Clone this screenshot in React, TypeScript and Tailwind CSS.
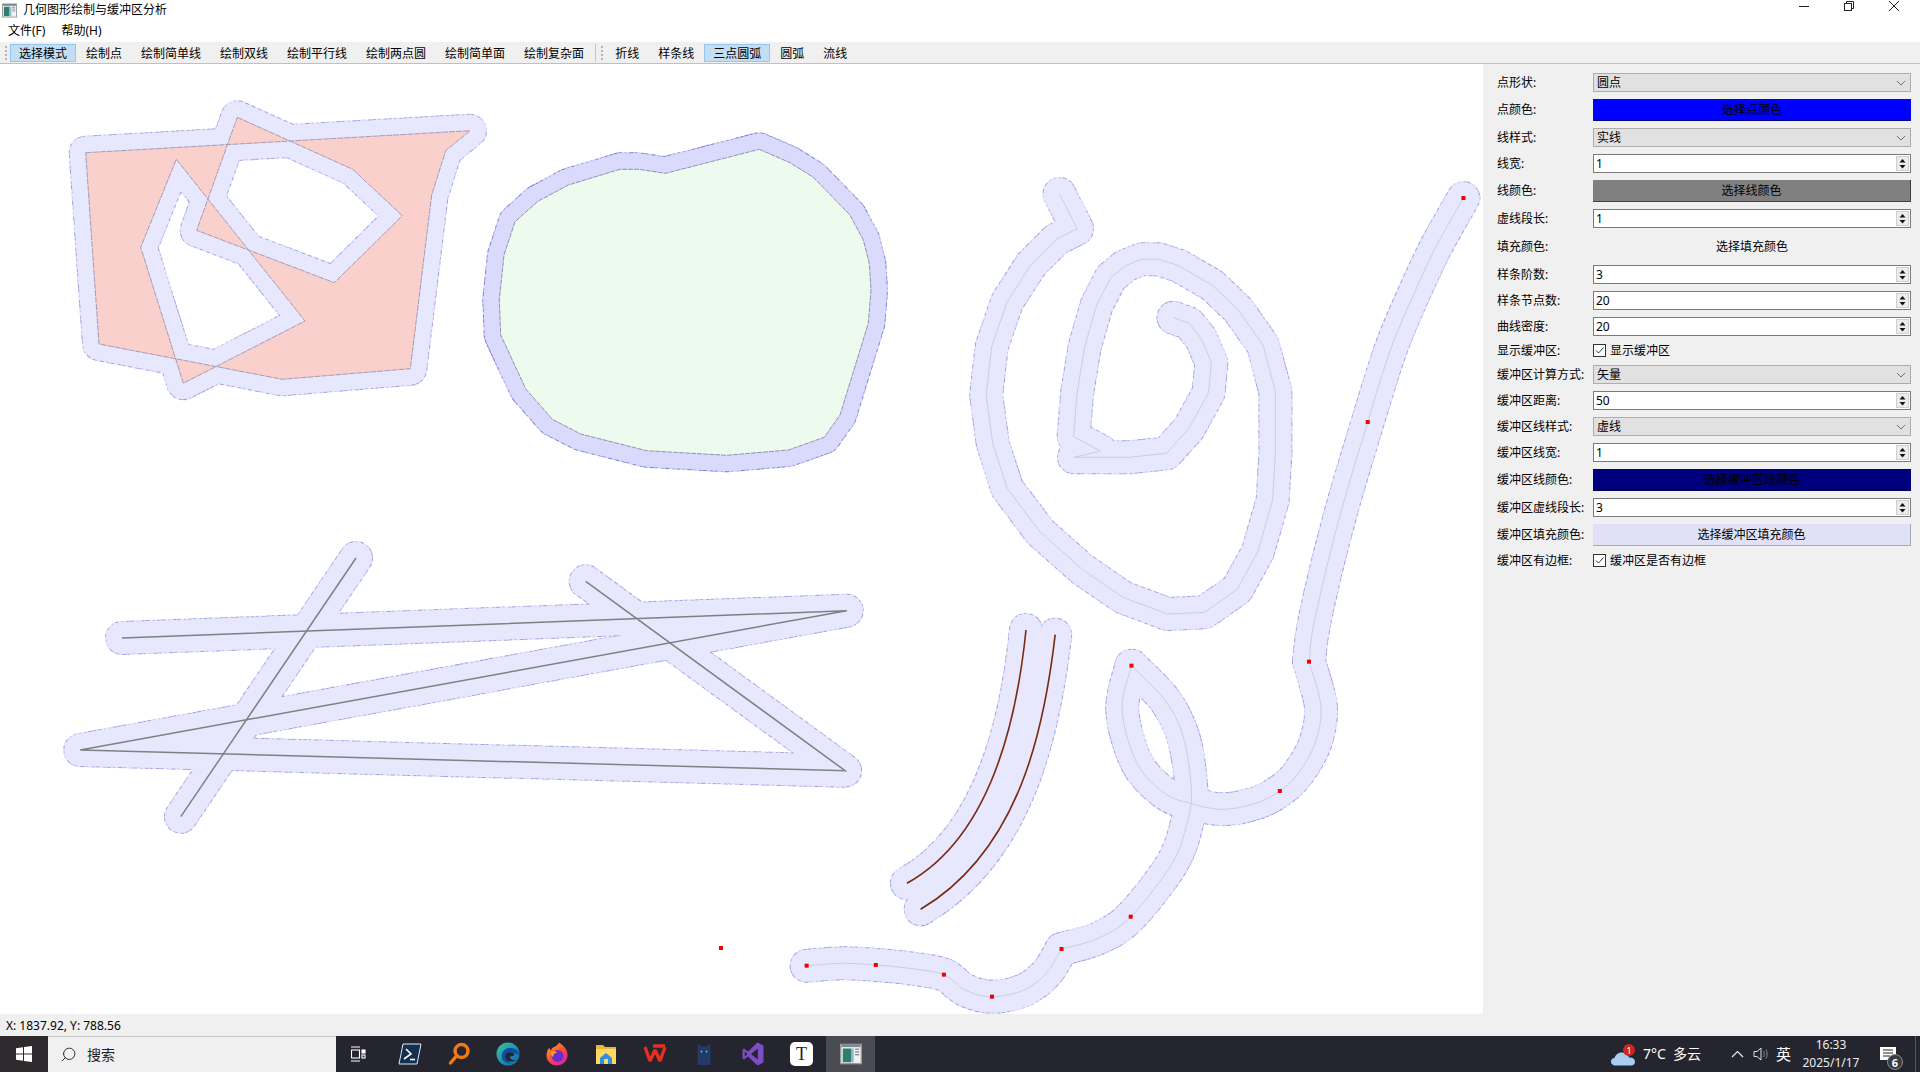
import { Search } from "lucide-react";

type Pt = number[];

const map = (ox: number, oy: number, sx: number, sy: number, pts: Pt[]) =>
  pts.map(([x, y]) => [ox + x / sx, oy + y / sy]);
const line = (pts: Pt[], close = false) =>
  "M" + pts.map((p) => p[0].toFixed(1) + " " + p[1].toFixed(1)).join(" L") + (close ? " Z" : "");

// catmull-rom through the clicked points
const smooth = (pts: Pt[]) => {
  let d = `M${pts[0][0].toFixed(1)} ${pts[0][1].toFixed(1)}`;
  for (let i = 0; i < pts.length - 1; i++) {
    const a = pts[i - 1] || pts[i];
    const b = pts[i];
    const c = pts[i + 1];
    const e = pts[i + 2] || c;
    d += ` C${(b[0] + (c[0] - a[0]) / 6).toFixed(1)} ${(b[1] + (c[1] - a[1]) / 6).toFixed(1)} ${(c[0] - (e[0] - b[0]) / 6).toFixed(1)} ${(c[1] - (e[1] - b[1]) / 6).toFixed(1)} ${c[0].toFixed(1)} ${c[1].toFixed(1)}`;
  }
  return d;
};

const outer = map(50, 90, 3, 3, [[107,188],[1260,122],[1187,182],[1145,315],[1081,836],[697,868],[147,762]]);
const holeA = map(50, 90, 3, 3, [[562,82],[908,238],[1057,377],[853,578],[440,421]]);
const holeB = map(50, 90, 3, 3, [[379,208],[765,693],[400,880],[272,472]]);
const complexRings = [line(outer, true), line(holeA, true), line(holeB, true)];

const greenPoly = line(map(470, 120, 3, 3, [[868,88],[960,128],[1030,172],[1140,285],[1180,360],[1198,430],[1203,510],[1195,610],[1110,885],[1063,952],[955,990],[770,1006],[530,992],[332,942],[247,898],[168,808],[92,645],[88,540],[102,405],[135,305],[205,243],[295,195],[450,148],[505,148],[587,160]]), true);

const grayA = line(map(50, 530, 1.889, 3, [[136,324],[1505,242],[57,660],[1502,722],[1012,154]]));
const grayB = line(map(50, 530, 1.889, 3, [[578,84],[247,860]]));

const spiral = line(map(960, 170, 2.904, 3, [[289,72],[340,176],[280,208],[207,283],[137,395],[92,530],[76,675],[95,820],[137,955],[232,1085],[355,1198],[473,1282],[603,1332],[710,1327],[805,1258],[865,1145],[908,990],[916,850],[916,665],[880,525],[808,420],[732,345],[635,287],[577,268],[527,268],[480,287],[438,323],[397,405],[362,530],[340,670],[330,800],[408,843],[331,862],[490,862],[600,850],[665,775],[722,668],[730,578],[700,505],[665,460],[620,443]]));

const z10 = (pts: Pt[]) => map(960, 170, 2.904, 3, pts);
const z11 = (pts: Pt[]) => map(780, 610, 2.703, 3, pts);
const curveTop = [
  ...z10([[1462,84],[1380,235],[1310,390],[1250,540],[1184,756],[1100,1050],[1030,1350]]),
  ...z11([[1430,155]]),
];
const curveLoop = z11([[1430,155],[1462,290],[1446,401],[1400,491],[1351,543],[1286,580],[1195,598],[1110,580],[1040,550],[965,460],[925,300],[950,167]]);
const curveDown = z11([[950,167],[1040,270],[1090,380],[1112,540],[1100,640],[1060,760],[948,920],[860,985],[761,1017]]);
const curveEnd = z11([[761,1017],[720,1090],[660,1140],[573,1160],[500,1140],[443,1094],[350,1075],[259,1065],[170,1060],[72,1067]]);
const splinePaths = [smooth(curveTop), smooth(curveLoop), smooth(curveDown), smooth(curveEnd)];

const redDots = [
  ...z10([[1462,84],[1184,756]]),
  ...z11([[1430,155],[1351,543],[950,167],[948,920],[761,1017],[573,1160],[443,1094],[259,1065],[72,1067]]),
  [721, 948],
];

const arcA = "M1026 630 C1016.8 720 990.9 836.7 906.9 883.3";
const arcB = "M1055.2 634.7 C1044.5 726.7 1020.5 850 920.6 909.3";

const lightShapes = [...complexRings, grayA, grayB, spiral, ...splinePaths, arcA, arcB];

function Canvas() {
  return (
    <svg viewBox="0 64 1483 950" className="block h-[950px] w-[1483px] flex-none bg-white">
      <defs>
        <pattern id="dashLight" width="7" height="7" patternUnits="userSpaceOnUse" patternTransform="rotate(24)">
          <rect width="7" height="7" fill="#e2e2fb" />
          <rect width="4" height="4" fill="#a0a0e2" />
          <rect x="4" y="4" width="3" height="3" fill="#a0a0e2" />
        </pattern>
        <pattern id="dashDark" width="7" height="7" patternUnits="userSpaceOnUse" patternTransform="rotate(24)">
          <rect width="7" height="7" fill="#d0d0f6" />
          <rect width="4" height="4" fill="#7c7cd0" />
          <rect x="4" y="4" width="3" height="3" fill="#7c7cd0" />
        </pattern>
      </defs>

      <g fill="none" strokeLinejoin="round" strokeLinecap="round">
        {lightShapes.map((d, i) => (
          <path key={i} d={d} stroke="url(#dashLight)" strokeWidth="34" />
        ))}
        {lightShapes.map((d, i) => (
          <path key={i} d={d} stroke="#e7e7fe" strokeWidth="32" />
        ))}
        <path d={greenPoly} stroke="url(#dashDark)" strokeWidth="34" />
        <path d={greenPoly} stroke="#dadafc" strokeWidth="32" />
      </g>

      <path d={complexRings.join(" ")} fillRule="evenodd" fill="#f9d0cb" stroke="#a79bb4" strokeWidth="1" strokeDasharray="6 1" />
      <path d={greenPoly} fill="#ecfbee" stroke="#9292b4" strokeWidth="1" strokeDasharray="5 1" />

      <g fill="none" stroke="#808080" strokeWidth="1.5">
        <path d={grayA} />
        <path d={grayB} />
      </g>
      <g fill="none" stroke="#cdcde0" strokeWidth="1">
        <path d={spiral} />
        {splinePaths.map((d, i) => (
          <path key={i} d={d} />
        ))}
      </g>
      <g fill="none" stroke="#7a2a10" strokeWidth="1.6">
        <path d={arcA} />
        <path d={arcB} />
      </g>
      {redDots.map((p, i) => (
        <rect key={i} x={p[0] - 2} y={p[1] - 2} width="4" height="4" fill="#f00000" />
      ))}
    </svg>
  );
}

function AppIcon({ size = 16 }: { size?: number }) {
  return (
    <svg width={size} height={size} viewBox="0 0 16 16">
      <rect x="0.5" y="1" width="15" height="14" fill="#f2f2f2" stroke="#9a9a9a" />
      <rect x="1" y="1" width="14" height="2" fill="#7d8a93" />
      <rect x="2" y="4" width="6" height="10" fill="#2f7d6b" />
      <rect x="8" y="4" width="2" height="10" fill="#8fb8d0" />
      <rect x="11" y="4" width="3" height="1" fill="#889" />
      <rect x="11" y="6" width="3" height="1" fill="#889" />
      <rect x="11" y="8" width="3" height="1" fill="#889" />
    </svg>
  );
}

function Grip() {
  return (
    <div className="flex h-4 w-[3px] flex-none flex-col justify-between py-[1px]">
      <span className="h-[2px] w-[2px] bg-[#b4b4b4]" />
      <span className="h-[2px] w-[2px] bg-[#b4b4b4]" />
      <span className="h-[2px] w-[2px] bg-[#b4b4b4]" />
      <span className="h-[2px] w-[2px] bg-[#b4b4b4]" />
    </div>
  );
}

function ToolBtn({ label, active }: { label: string; active?: boolean }) {
  return (
    <div
      className={`flex h-[18px] items-center justify-center border px-[8px] pt-[1px] whitespace-nowrap ${
        active ? "border-[#92c7f5] bg-[#c3ddf3]" : "border-transparent"
      }`}
    >
      {label}
    </div>
  );
}

function Chevron() {
  return (
    <svg width="10" height="6" viewBox="0 0 10 6" className="flex-none">
      <path d="M1 1 L5 5 L9 1" fill="none" stroke="#707070" strokeWidth="1" />
    </svg>
  );
}

function Combo({ value }: { value: string }) {
  return (
    <div className="flex h-[19px] w-[318px] items-center justify-between border border-[#adadad] bg-[#e1e1e1] pr-[4px] pl-[3px]">
      <span>{value}</span>
      <Chevron />
    </div>
  );
}

function Spin({ value }: { value: string }) {
  return (
    <div className="flex h-[19px] w-[318px] items-center justify-between border border-[#7a7a7a] bg-white pl-[2px]">
      <span>{value}</span>
      <div className="mr-[1px] flex h-[15px] w-[13px] flex-col border border-[#cfcfcf] bg-[#ececec]">
        <svg viewBox="0 0 11 6" className="h-[7px] w-full">
          <path d="M5.5 1.5 L8.5 5 L2.5 5 Z" fill="#111" />
        </svg>
        <svg viewBox="0 0 11 6" className="h-[6px] w-full">
          <path d="M2.5 1 L8.5 1 L5.5 4.5 Z" fill="#111" />
        </svg>
      </div>
    </div>
  );
}

function Check({ text }: { text: string }) {
  return (
    <div className="flex h-[15px] items-center gap-[4px]">
      <div className="flex h-[13px] w-[13px] items-center justify-center border border-[#333] bg-white">
        <svg width="11" height="11" viewBox="0 0 11 11">
          <path d="M2 5.5 L4.5 8 L9.5 2.5" fill="none" stroke="#333" strokeWidth="1" />
        </svg>
      </div>
      <span>{text}</span>
    </div>
  );
}

function Row({ label, children }: { label: string; children: React.ReactNode }) {
  return (
    <div className="flex items-center">
      <span className="w-24 flex-none whitespace-nowrap">{label}</span>
      {children}
    </div>
  );
}

function ColorBtn({ text, className }: { text: string; className: string }) {
  return <div className={`flex h-[22px] w-[318px] items-center justify-center ${className}`}>{text}</div>;
}

function Panel() {
  return (
    <div className="flex w-[437px] flex-none flex-col gap-[7px] bg-[#f0f0f0] pt-[9px] pr-[9px] pl-[14px]">
      <Row label="点形状:"><Combo value="圆点" /></Row>
      <Row label="点颜色:"><ColorBtn text="选择点颜色" className="border-b border-[#00008b] bg-[#0000ff]" /></Row>
      <Row label="线样式:"><Combo value="实线" /></Row>
      <Row label="线宽:"><Spin value="1" /></Row>
      <Row label="线颜色:"><ColorBtn text="选择线颜色" className="border-r border-b border-[#404040] bg-[#808080]" /></Row>
      <Row label="虚线段长:"><Spin value="1" /></Row>
      <Row label="填充颜色:"><div className="flex h-[23px] w-[318px] items-center justify-center">选择填充颜色</div></Row>
      <Row label="样条阶数:"><Spin value="3" /></Row>
      <Row label="样条节点数:"><Spin value="20" /></Row>
      <Row label="曲线密度:"><Spin value="20" /></Row>
      <Row label="显示缓冲区:"><Check text="显示缓冲区" /></Row>
      <Row label="缓冲区计算方式:"><Combo value="矢量" /></Row>
      <Row label="缓冲区距离:"><Spin value="50" /></Row>
      <Row label="缓冲区线样式:"><Combo value="虚线" /></Row>
      <Row label="缓冲区线宽:"><Spin value="1" /></Row>
      <Row label="缓冲区线颜色:"><ColorBtn text="选择缓冲区线颜色" className="border-b border-[#000050] bg-[#00007f]" /></Row>
      <Row label="缓冲区虚线段长:"><Spin value="3" /></Row>
      <Row label="缓冲区填充颜色:"><ColorBtn text="选择缓冲区填充颜色" className="border-r border-b border-[#a9a9b8] bg-[#e0e0f6]" /></Row>
      <Row label="缓冲区有边框:"><Check text="缓冲区是否有边框" /></Row>
    </div>
  );
}

function WinControls() {
  return (
    <div className="flex items-start self-start pt-[1px] pr-[4px]">
      <div className="flex w-[45px] justify-center">
        <svg width="10" height="10" viewBox="0 0 10 10"><path d="M0 5.5 H10" stroke="#222" /></svg>
      </div>
      <div className="flex w-[45px] justify-center">
        <svg width="10" height="10" viewBox="0 0 10 10" fill="none" stroke="#222">
          <rect x="0.5" y="2.5" width="7" height="7" />
          <path d="M2.5 2.5 V0.5 H9.5 V7.5 H7.5" />
        </svg>
      </div>
      <div className="flex w-[45px] justify-center">
        <svg width="10" height="10" viewBox="0 0 10 10"><path d="M0 0 L10 10 M10 0 L0 10" stroke="#222" /></svg>
      </div>
    </div>
  );
}

function TaskSlot({ children, active }: { children: React.ReactNode; active?: boolean }) {
  return (
    <div className={`flex h-full w-[49px] flex-none items-center justify-center ${active ? "bg-[#4b4b53]" : ""}`}>
      {children}
    </div>
  );
}

function Taskbar() {
  return (
    <div className="flex h-[36px] flex-none items-center bg-[#25252f] text-white">
      <div className="flex h-full w-[48px] flex-none items-center justify-center bg-[#2e2a2e]">
        <svg width="16" height="16" viewBox="0 0 16 16" fill="#fff">
          <path d="M0 2.3 L7 1.3 V7.6 H0 Z M8 1.1 L16 0 V7.6 H8 Z M0 8.4 H7 V14.7 L0 13.7 Z M8 8.4 H16 V16 L8 14.9 Z" />
        </svg>
      </div>
      <div className="flex h-full w-[288px] flex-none items-center border-t border-[#c8c8c8] bg-[#f0f0f0] pl-[12px] text-[14px] text-[#222]">
        <Search size={17} strokeWidth={1.3} className="-scale-x-100" />
        <span className="ml-[10px] pt-[1px]">搜索</span>
      </div>

      <div className="flex h-full items-center">
        <TaskSlot>
          <svg width="15" height="16" viewBox="0 0 15 16" fill="none" stroke="#fff" strokeWidth="1.1" className="mr-[4px]">
            <path d="M0 1 H9 M0 15 H9" />
            <rect x="0.5" y="4" width="8" height="8" />
            <rect x="11" y="4" width="3" height="3" fill="#fff" />
            <rect x="11" y="9" width="3" height="3" />
          </svg>
        </TaskSlot>
        <TaskSlot>
          <svg width="24" height="22" viewBox="0 0 24 22">
            <path d="M5 1 H23 L19 21 H1 Z" fill="#14304f" stroke="#dfe8f0" />
            <path d="M8 6 L13 11 L6 16" fill="none" stroke="#fff" strokeWidth="1.6" />
            <path d="M12 16.5 H17" stroke="#fff" strokeWidth="1.6" />
          </svg>
        </TaskSlot>
        <TaskSlot>
          <svg width="24" height="24" viewBox="0 0 24 24" fill="none" stroke="#f07a14" strokeWidth="3.4">
            <circle cx="14.5" cy="9" r="6.5" />
            <path d="M9.5 14 L3.5 21" strokeLinecap="round" />
          </svg>
        </TaskSlot>
        <TaskSlot>
          <svg width="24" height="24" viewBox="0 0 24 24">
            <defs>
              <linearGradient id="edgeG" x1="0" y1="0" x2="1" y2="1">
                <stop offset="0" stopColor="#36c7a0" />
                <stop offset="1" stopColor="#0c62b8" />
              </linearGradient>
            </defs>
            <circle cx="12" cy="12" r="11.5" fill="url(#edgeG)" />
            <path d="M23 13 C23 8 18 5.5 13 6 C8 6.5 5 11 6 16 C7 20 12 22 16 21 C11 20 9.5 15 12.5 12.5 C15 10.5 20 11 23 13 Z" fill="#0a4f9e" />
            <path d="M13 10.5 C10 11 8.5 14 10 17 C12 20 17 20.5 20 18 C17 18.6 14 17.5 14 15 C14 14 18 14.5 18.5 12.5 C18 11 15 10.2 13 10.5 Z" fill="#25252f" />
          </svg>
        </TaskSlot>
        <TaskSlot>
          <svg width="24" height="24" viewBox="0 0 24 24">
            <defs>
              <linearGradient id="foxG" x1="0" y1="0" x2="0.7" y2="1">
                <stop offset="0" stopColor="#ffb21a" />
                <stop offset="0.55" stopColor="#ff4f3a" />
                <stop offset="1" stopColor="#d6249a" />
              </linearGradient>
            </defs>
            <path d="M14 0.5 C20 4 23 9 22.5 14 C22 19.5 17.5 23.5 12 23.5 C6 23.5 1.5 19 1.5 13.5 C1.5 10 3 7 4.5 5.5 C4.5 7 5 8 6 8.5 C7 5 10 5 11 4 C12 3 13.8 2 14 0.5 Z" fill="url(#foxG)" />
            <circle cx="12.5" cy="14" r="6" fill="#6b2bd0" />
            <path d="M6 10 C9 8 11 9 12 11 C9 11 8 13 8.5 15 C6.5 14.5 5.5 12 6 10 Z" fill="#ffa21e" />
          </svg>
        </TaskSlot>
        <TaskSlot>
          <svg width="22" height="22" viewBox="0 0 22 22">
            <path d="M1 2 H8 L10 4 H21 V7 H1 Z" fill="#e8b63a" />
            <rect x="1" y="6" width="20" height="15" fill="#ffd862" />
            <path d="M5 21 V15 L11 10 L17 15 V21 H13 V16 H9 V21 Z" fill="#2f8fe0" />
          </svg>
        </TaskSlot>
        <TaskSlot>
          <svg width="24" height="20" viewBox="0 0 24 20" fill="none" stroke="#e5301f" strokeWidth="3.4" strokeLinejoin="bevel">
            <path d="M2 3 L7 17 L12 6 L17 17 L22 3 M10 2 H22" />
          </svg>
        </TaskSlot>
        <TaskSlot>
          <svg width="16" height="24" viewBox="0 0 16 24">
            <path d="M1.5 23 V7 L2.5 1.5 L6 4.5 H10 L13.5 1.5 L14.5 7 V23 Z" fill="#1f3b66" />
            <circle cx="5.5" cy="9.5" r="0.9" fill="#7fb0e8" />
            <circle cx="10.5" cy="9.5" r="0.9" fill="#7fb0e8" />
          </svg>
        </TaskSlot>
        <TaskSlot>
          <svg width="22" height="24" viewBox="0 0 22 24">
            <path d="M15.5 0.5 L21.5 3.5 V20.5 L15.5 23.5 L6 14.5 L2 17.5 L0.5 16.5 V7.5 L2 6.5 L6 9.5 Z" fill="#7c4dc4" />
            <path d="M15.8 6.5 V17.5 L9 12 Z M2.8 9.5 V14.5 L5.5 12 Z" fill="#25252f" />
          </svg>
        </TaskSlot>
        <TaskSlot>
          <div className="flex h-[24px] w-[23px] items-center justify-center rounded-[5px] bg-white font-['Liberation_Serif',serif] text-[18px] leading-none text-[#222]">
            T
          </div>
        </TaskSlot>
        <TaskSlot active>
          <AppIcon size={22} />
        </TaskSlot>
      </div>

      <div className="flex-1" />

      <div className="relative mr-[8px] flex h-full w-[24px] flex-none items-center">
        <svg width="24" height="16" viewBox="0 0 24 16" className="mt-[7px]">
          <path d="M5 15.5 C1.5 15.5 0 13.5 0 11.5 C0 9.5 1.5 8.2 3.5 8 C4.5 4.5 7.5 2.5 11 2.5 C14.5 2.5 17 4.5 18 7.5 C21.5 7.5 24 9 24 11.8 C24 14 22.5 15.5 20 15.5 Z" fill="#a9cdf2" />
        </svg>
        <div className="absolute top-[8px] left-[12px] flex h-[12px] w-[12px] items-center justify-center rounded-full bg-[#c9281d] text-[9px] leading-none text-white">
          1
        </div>
      </div>
      <div className="w-[74px] flex-none text-[14px] whitespace-nowrap">7°C&nbsp;&nbsp;多云</div>
      <div className="mr-[9px] ml-[14px] flex-none">
        <svg width="13" height="8" viewBox="0 0 13 8" fill="none" stroke="#eee" strokeWidth="1.2">
          <path d="M1 7 L6.5 1.5 L12 7" />
        </svg>
      </div>
      <svg width="17" height="16" viewBox="0 0 17 16" fill="none" stroke="#ddd" strokeWidth="1" className="flex-none">
        <path d="M1 5.5 H4 L8 2 V14 L4 10.5 H1 Z" />
        <path d="M10.5 5 C11.5 7 11.5 9 10.5 11 M13 3.5 C14.5 6 14.5 10 13 12.5" stroke="#888" />
      </svg>
      <div className="ml-[6px] flex-none text-[15px]">英</div>
      <div className="ml-[10px] flex w-[60px] flex-none flex-col items-center text-[12px] leading-[18px] text-[#eee]">
        <span>16:33</span>
        <span>2025/1/17</span>
      </div>
      <div className="relative ml-[19px] h-full w-[24px] flex-none">
        <svg width="16" height="14" viewBox="0 0 16 14" className="absolute top-[11px] left-0">
          <path d="M0 0 H16 V13 H0 Z" fill="#fff" />
          <path d="M3 3 H13 M3 6 H13 M3 9 H10" stroke="#25252f" />
        </svg>
        <div className="absolute top-[18px] left-[7px] flex h-[16px] w-[16px] items-center justify-center rounded-full border border-[#8a8a8a] bg-[#3a3a40] text-[11px] leading-none font-bold">
          6
        </div>
      </div>
      <div className="ml-[11px] h-full w-[1px] flex-none bg-[#55555c]" />
      <div className="w-[4px] flex-none" />
    </div>
  );
}

export default function App() {
  return (
    <div className="flex h-[1072px] w-[1920px] flex-col overflow-hidden bg-white font-['Noto_Sans','Noto_Sans_CJK_SC',sans-serif] text-[12px] leading-none text-black">
      <div className="flex h-[20px] flex-none items-center justify-between bg-white">
        <div className="flex items-center pl-[2px]">
          <AppIcon size={15} />
          <span className="ml-[6px]">几何图形绘制与缓冲区分析</span>
        </div>
        <WinControls />
      </div>

      <div className="flex h-[22px] flex-none items-center gap-[16px] bg-white pl-[8px]">
        <span>文件(F)</span>
        <span>帮助(H)</span>
      </div>

      <div className="flex h-[22px] flex-none items-center border-b border-[#c0c0c0] bg-[#f0f0f0] pt-[1px] pl-[5px]">
        <Grip />
        <div className="ml-[2px] flex items-center gap-[1px]">
          <ToolBtn label="选择模式" active />
          <ToolBtn label="绘制点" />
          <ToolBtn label="绘制简单线" />
          <ToolBtn label="绘制双线" />
          <ToolBtn label="绘制平行线" />
          <ToolBtn label="绘制两点圆" />
          <ToolBtn label="绘制简单面" />
          <ToolBtn label="绘制复杂面" />
        </div>
        <div className="mr-[5px] ml-[2px] h-[18px] w-[1px] bg-[#c4c4c4]" />
        <Grip />
        <div className="ml-[2px] flex items-center gap-[1px]">
          <ToolBtn label="折线" />
          <ToolBtn label="样条线" />
          <ToolBtn label="三点圆弧" active />
          <ToolBtn label="圆弧" />
          <ToolBtn label="流线" />
        </div>
      </div>

      <div className="flex h-[950px] flex-none">
        <Canvas />
        <Panel />
      </div>

      <div className="flex h-[22px] flex-none items-center bg-[#f0f0f0] pt-[1px] pl-[6px]">X: 1837.92, Y: 788.56</div>

      <Taskbar />
    </div>
  );
}
